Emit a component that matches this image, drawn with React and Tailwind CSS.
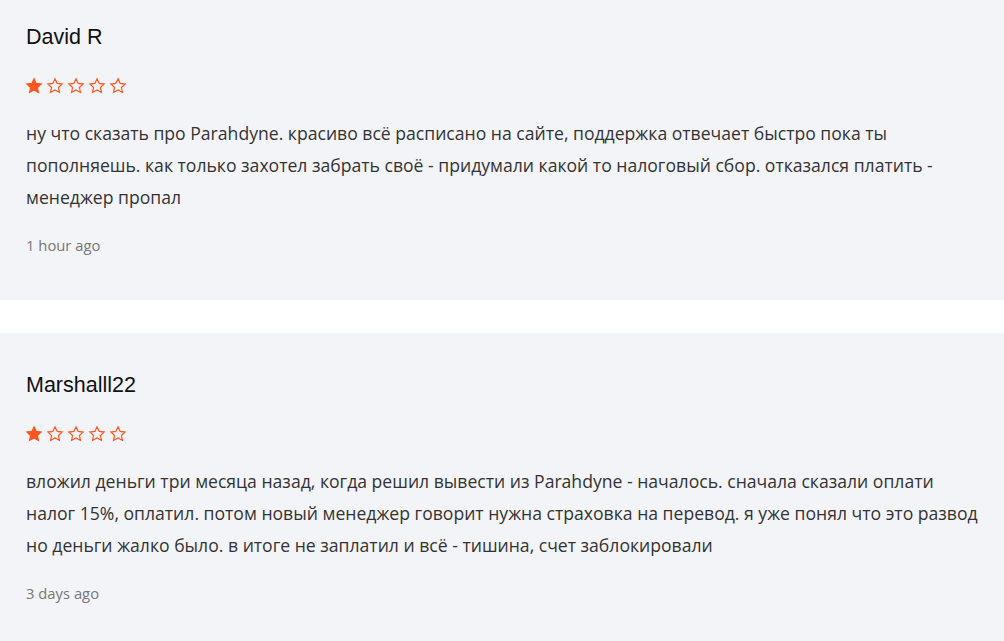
import React from 'react';

const reviews = [
  {
    name: 'David R',
    rating: 1,
    text: 'ну что сказать про Parahdyne. красиво всё расписано на сайте, поддержка отвечает быстро пока ты пополняешь. как только захотел забрать своё - придумали какой то налоговый сбор. отказался платить - менеджер пропал',
    time: '1 hour ago',
  },
  {
    name: 'Marshalll22',
    rating: 1,
    text: 'вложил деньги три месяца назад, когда решил вывести из Parahdyne - началось. сначала сказали оплати налог 15%, оплатил. потом новый менеджер говорит нужна страховка на перевод. я уже понял что это развод но деньги жалко было. в итоге не заплатил и всё - тишина, счет заблокировали',
    time: '3 days ago',
  },
];

const Star = ({ filled }) => (
  <svg width="18" height="18" viewBox="0 0 24 24" className="block">
    <path
      d="M12 2.5l2.9 6.1 6.6.8-4.9 4.6 1.3 6.6L12 17.3l-5.9 3.3 1.3-6.6-4.9-4.6 6.6-.8z"
      fill={filled ? '#ff5722' : 'none'}
      stroke="#ff5722"
      strokeWidth="1.6"
      strokeLinejoin="miter"
    />
  </svg>
);

const ReviewCard = ({ review }) => (
  <div className="bg-[#f3f4f8] pl-[26px] pr-[24px] pt-[38px] pb-[45px]">
    <h3 className="text-[21.5px] leading-[28px] text-[#111] font-['Liberation_Sans',Arial,sans-serif]">
      {review.name}
    </h3>
    <div className="flex gap-[3px] mt-[26px] ml-[-1px]">
      {[1, 2, 3, 4, 5].map((i) => (
        <Star key={i} filled={i <= review.rating} />
      ))}
    </div>
    <p className="mt-[22px] text-[17.6px] leading-[32px] text-[#333] font-['Open_Sans',sans-serif]">
      {review.text}
    </p>
    <div className="mt-[22px] text-[14.8px] leading-[20px] text-[#777] font-['Open_Sans',sans-serif]">
      {review.time}
    </div>
  </div>
);

const App = () => {
  return (
    <div className="bg-white min-h-screen overflow-hidden">
      <div className="flex flex-col gap-[33px] mt-[-15px]">
        {reviews.map((r) => (
          <ReviewCard key={r.name} review={r} />
        ))}
      </div>
    </div>
  );
};

export default App;
